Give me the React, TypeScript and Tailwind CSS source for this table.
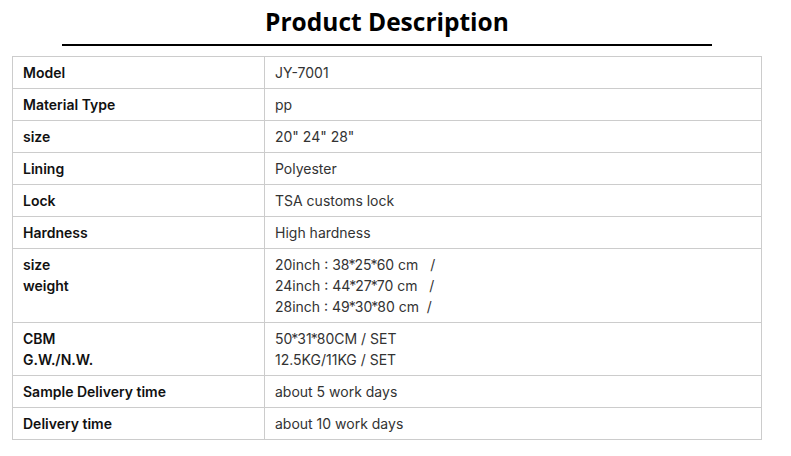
import React from "react";

const rows: { label: string[]; value: string[] }[] = [
  { label: ["Model"], value: ["JY-7001"] },
  { label: ["Material Type"], value: ["pp"] },
  { label: ["size"], value: ["20\" 24\" 28\""] },
  { label: ["Lining"], value: ["Polyester"] },
  { label: ["Lock"], value: ["TSA customs lock"] },
  { label: ["Hardness"], value: ["High hardness"] },
  {
    label: ["size", "weight"],
    value: [
      "20inch : 38*25*60 cm \u00a0 /",
      "24inch : 44*27*70 cm \u00a0 /",
      "28inch : 49*30*80 cm \u00a0/",
    ],
  },
  { label: ["CBM", "G.W./N.W."], value: ["50*31*80CM / SET", "12.5KG/11KG / SET"] },
  { label: ["Sample Delivery time"], value: ["about 5 work days"] },
  { label: ["Delivery time"], value: ["about 10 work days"] },
];

function Val({ text }: { text: string }) {
  const parts = text.split("*");
  return (
    <div className="whitespace-pre">
      {parts.map((p, i) => (
        <React.Fragment key={i}>
          {i > 0 && <span className="mx-[-1px]">*</span>}
          {p}
        </React.Fragment>
      ))}
    </div>
  );
}

export default function App() {
  return (
    <div className="w-[791px] h-[456px] bg-white">
      <div className="ml-[12px] w-[750px]">
        <div className="flex justify-center pt-[4px]">
          <h1
            className="text-[24.5px] leading-[36px] font-bold text-black"
            style={{ fontFamily: '"Open Sans", sans-serif' }}
          >
            Product Description
          </h1>
        </div>
        <div className="mx-[50px] mt-[4px] h-[2px] bg-black" />
        <table
          className="mt-[10px] w-[750px] border-collapse text-[14px] leading-[21px]"
          style={{ fontFamily: "Inter, sans-serif" }}
        >
          <tbody>
            {rows.map((r, i) => (
              <tr key={i}>
                <td className="w-[252px] border border-[#cccccc] px-[10px] py-[5px] align-top font-semibold text-[#111111]">
                  {r.label.map((l, j) => (
                    <div key={j}>{l}</div>
                  ))}
                </td>
                <td className="border border-[#cccccc] px-[10px] py-[5px] align-top text-[#333333]">
                  {r.value.map((v, j) => (
                    <Val key={j} text={v} />
                  ))}
                </td>
              </tr>
            ))}
          </tbody>
        </table>
      </div>
    </div>
  );
}
